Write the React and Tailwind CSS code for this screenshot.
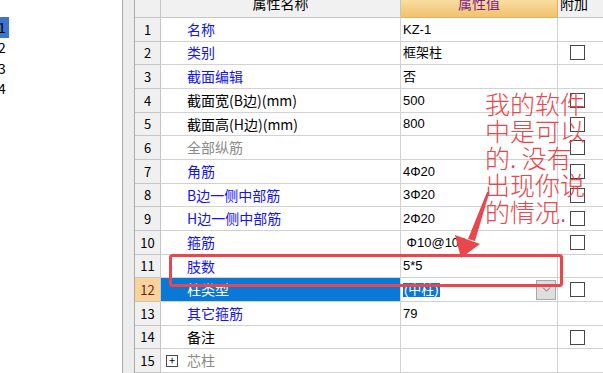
import { ChevronDown } from "lucide-react";

const rows = [
  { n: 1, name: "名称", tone: "blue", value: "KZ-1", box: false },
  { n: 2, name: "类别", tone: "blue", value: "框架柱", box: true },
  { n: 3, name: "截面编辑", tone: "blue", value: "否", box: false },
  { n: 4, name: "截面宽(B边)(mm)", tone: "black", value: "500", box: true },
  { n: 5, name: "截面高(H边)(mm)", tone: "black", value: "800", box: true },
  { n: 6, name: "全部纵筋", tone: "gray", value: "", box: true },
  { n: 7, name: "角筋", tone: "blue", value: "4Φ20", box: true },
  { n: 8, name: "B边一侧中部筋", tone: "blue", value: "3Φ20", box: true },
  { n: 9, name: "H边一侧中部筋", tone: "blue", value: "2Φ20", box: true },
  { n: 10, name: "箍筋", tone: "blue", value: " Φ10@100", box: true },
  { n: 11, name: "肢数", tone: "blue", value: "5*5", box: false },
  { n: 12, name: "柱类型", tone: "selected", value: "(中柱)", box: true, active: true },
  { n: 13, name: "其它箍筋", tone: "blue", value: "79", box: false },
  { n: 14, name: "备注", tone: "black", value: "", box: true },
  { n: 15, name: "芯柱", tone: "gray", value: "", box: false, expand: true },
];

const toneClass = {
  blue: "text-[#1414f0]",
  black: "text-black",
  gray: "text-[#8a8a8a]",
  selected: "text-white",
};

function Row({ row }) {
  return (
    <div className="grid grid-cols-[26px_240px_157px_45px] h-[23.7px]">
      {/* row number */}
      <div
        className={`flex items-center justify-center border-r border-b border-[#c6c6c6] text-[13px] ${
          row.active ? "bg-[#f8d49a] text-[#7a1c1c]" : "bg-[#f0f0f0] text-black"
        }`}
      >
        {row.n}
      </div>

      {/* property name */}
      <div
        className={`flex items-center border-r border-b border-[#d2d2d2] text-[14px] ${
          row.active ? "bg-[#0a78d6]" : "bg-white"
        } ${toneClass[row.tone]}`}
      >
        {row.expand ? (
          <span className="w-[12px] h-[12px] ml-[5px] mr-[9px] border border-[#4a4a4a] flex items-center justify-center text-[11px] leading-none text-black">
            +
          </span>
        ) : (
          <span className="w-[26px] shrink-0" />
        )}
        <span className="whitespace-nowrap">{row.name}</span>
      </div>

      {/* property value */}
      <div className="flex items-center justify-between border-r border-b border-[#d2d2d2] bg-white pl-[2px] text-[13px] text-black font-['Liberation_Sans','Noto_Sans_CJK_SC',sans-serif] whitespace-pre">
        {row.active ? (
          <>
            <span className="bg-[#0a78d6] text-white px-[1px] leading-[14px]">{row.value}</span>
            <span className="w-[20px] h-[20px] mr-[1px] bg-[#dedede] border border-[#a8a8a8] flex items-center justify-center">
              <ChevronDown size={13} strokeWidth={1.5} className="text-[#555555]" />
            </span>
          </>
        ) : (
          <span>{row.value}</span>
        )}
      </div>

      {/* extra */}
      <div className="flex items-center border-b border-[#d2d2d2] bg-white pl-[12px]">
        {row.box && <span className="w-[15px] h-[15px] border border-[#474747] bg-white" />}
      </div>
    </div>
  );
}

export default function App() {
  return (
    <div className="relative flex w-[603px] h-[373px] overflow-hidden bg-white font-['Noto_Sans_CJK_SC',sans-serif]">
      {/* left list, scrolled a little to the right so the numbers are clipped */}
      <div className="w-[122px] shrink-0 pt-[17px] text-[14px] text-black overflow-hidden">
        {["1", "2", "3", "4"].map((n, i) => (
          <div key={n} className="h-[20.5px] flex items-center">
            <span
              className={`w-[9px] h-full flex items-center justify-start ${
                i === 0 ? "bg-[#3a76d0]" : ""
              }`}
            >
              <span className="-ml-[2px]">{n}</span>
            </span>
          </div>
        ))}
      </div>

      {/* splitter */}
      <div className="w-[13px] shrink-0 border-l border-r border-[#a9a9a9] bg-[#ececec]" />

      {/* property grid */}
      <div className="flex-1 flex flex-col">
        <div className="grid grid-cols-[26px_240px_157px_45px] h-[18px] overflow-hidden text-[14px]">
          <div className="bg-[#f0f0f0] border-r border-b border-[#c6c6c6]" />
          <div className="bg-[#f1f1f1] border-r border-b border-[#c6c6c6] flex justify-center overflow-hidden">
            <span className="-mt-[5px] leading-[16px] text-black">属性名称</span>
          </div>
          <div className="bg-gradient-to-b from-[#f9dca0] to-[#f0c36c] border-r border-b border-[#e2b060] flex justify-center overflow-hidden">
            <span className="-mt-[5px] leading-[16px] text-[#7d1f8a]">属性值</span>
          </div>
          <div className="bg-[#f1f1f1] border-b border-[#c6c6c6] pl-[2px] overflow-hidden">
            <span className="block -mt-[5px] leading-[16px] text-black">附加</span>
          </div>
        </div>
        {rows.map((row) => (
          <Row key={row.n} row={row} />
        ))}
      </div>

      {/* annotation overlay */}
      <svg className="absolute inset-0 pointer-events-none" width="603" height="373" viewBox="0 0 603 373">
        <rect x="170.5" y="255.5" width="391" height="30" rx="2" fill="none" stroke="#e9474c" strokeWidth="3" />
        <polygon points="487,192 489.5,192 475,241 468,239" fill="#e9474c" />
        <polygon points="455,235 480,244 461,258" fill="#e9474c" />
      </svg>
      <div className="absolute left-[485px] top-[90px] w-[110px] text-[25px] leading-[27px] text-[#e9474c] font-light pointer-events-none whitespace-pre">
        <div>我的软件</div>
        <div>中是可以</div>
        <div>的. 没有</div>
        <div>出现你说</div>
        <div>的情况.</div>
      </div>
    </div>
  );
}
